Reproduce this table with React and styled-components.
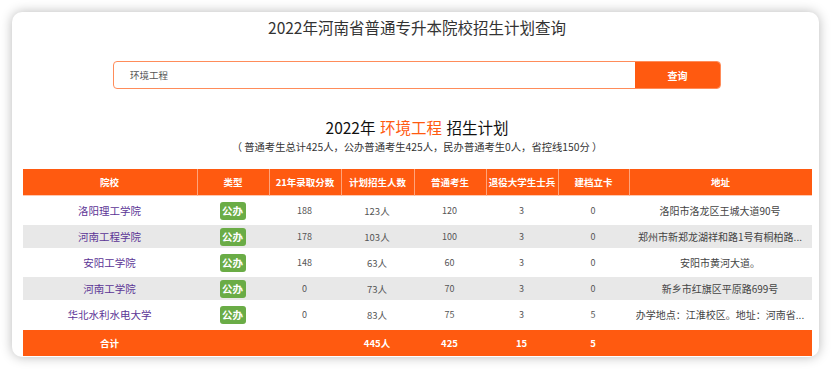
import React from 'react'
import styled, { createGlobalStyle } from 'styled-components';

const GlobalStyle = createGlobalStyle`
    html, body {
        margin: 0;
        padding: 0;
        background: #ffffff;
        font-family: "Noto Sans CJK SC", "Noto Sans", sans-serif;
    }
`

const Page = styled.div`
    padding: 12px 13px 13px 12px;
    width: 832px;
    height: 370px;
    box-sizing: border-box;
`

const Card = styled.div`
    background: #ffffff;
    border-radius: 10px;
    box-shadow: 0 0 12px rgba(0, 0, 0, 0.28);
    height: 345px;
    padding: 0 7px 0 10px;
    box-sizing: border-box;
    overflow: hidden;
    display: flex;
    flex-direction: column;
    align-items: center;
`

const Title = styled.h1`
    margin: 0;
    height: 30px;
    line-height: 30px;
    font-size: 15.5px;
    font-weight: 400;
    color: #333;
`

const SearchBar = styled.div`
    margin-top: 19px;
    display: flex;
    width: 608px;
    height: 28px;
    border: 1px solid #ff8c5a;
    border-radius: 4px;
    box-sizing: border-box;
    overflow: hidden;
`

const SearchInput = styled.div`
    flex: 1;
    padding-left: 16px;
    display: flex;
    align-items: center;
    font-size: 9.5px;
    color: #555;
`

const SearchButton = styled.button`
    width: 85px;
    border: none;
    background: #ff5a10;
    color: #fff;
    font-family: inherit;
    font-size: 10px;
    font-weight: 700;
    padding: 0;
`

const Heading = styled.h2`
    margin: 26px 0 0;
    line-height: 24px;
    font-size: 15.5px;
    font-weight: 400;
    color: #111;
    word-spacing: 1px;

    span {
        color: #ff5a10;
    }
`

const Summary = styled.p`
    margin: 0;
    line-height: 16px;
    font-size: 10.3px;
    color: #333;
`

const Table = styled.table`
    margin-top: 14px;
    width: 789px;
    table-layout: fixed;
    border-collapse: separate;
    border-spacing: 0;
    font-size: 10px;
    text-align: center;
`

const HeadCell = styled.th`
    height: 26px;
    padding: 0;
    background: #ff5a10;
    color: #fff;
    font-weight: 700;
    font-size: 9.5px;
    white-space: nowrap;
    border-left: 1px solid rgba(255, 255, 255, 0.45);
    border-bottom: 1px solid #ffc8b0;

    &:first-child { border-left: none; }
`

const Row = styled.tr`
    background: ${p => (p.$striped ? '#e8e8e8' : '#ffffff')};
`

const Cell = styled.td`
    height: 23px;
    padding: 0 4px;
    border-top: 3px solid #ffffff;
    color: ${p => p.$color || '#555'};
    font-size: ${p => p.$size || '9px'};
    white-space: nowrap;
    overflow: hidden;
`

const Badge = styled.span`
    display: inline-block;
    width: 26px;
    height: 18px;
    line-height: 18px;
    border-radius: 3px;
    background: #6aac46;
    color: #fff;
    font-size: 10.5px;
    font-weight: 700;
    vertical-align: middle;
`

const FootCell = styled.td`
    height: 26px;
    padding: 0;
    border-top: 4px solid #ffffff;
    background: #ff5a10;
    color: #fff;
    font-size: 9.5px;
    font-weight: 700;
`

const widths = [174, 72, 72, 73, 72, 72, 71, 183];
const headers = ['院校', '类型', '21年录取分数', '计划招生人数', '普通考生', '退役大学生士兵', '建档立卡', '地址'];

const schools = [
    { name: '洛阳理工学院', score: 188, plan: '123人', normal: 120, soldier: 3, poor: 0, addr: '洛阳市洛龙区王城大道90号' },
    { name: '河南工程学院', score: 178, plan: '103人', normal: 100, soldier: 3, poor: 0, addr: '郑州市新郑龙湖祥和路1号有桐柏路...' },
    { name: '安阳工学院', score: 148, plan: '63人', normal: 60, soldier: 3, poor: 0, addr: '安阳市黄河大道。' },
    { name: '河南工学院', score: 0, plan: '73人', normal: 70, soldier: 3, poor: 0, addr: '新乡市红旗区平原路699号' },
    { name: '华北水利水电大学', score: 0, plan: '83人', normal: 75, soldier: 3, poor: 5, addr: '办学地点：江淮校区。地址：河南省...' },
];

export default function App() {
    return (
        <Page>
            <GlobalStyle />
            <Card>
                <Title>2022年河南省普通专升本院校招生计划查询</Title>
                <SearchBar>
                    <SearchInput>环境工程</SearchInput>
                    <SearchButton>查询</SearchButton>
                </SearchBar>
                <Heading>2022年 <span>环境工程</span> 招生计划</Heading>
                <Summary>（ 普通考生总计425人，公办普通考生425人，民办普通考生0人，省控线150分 ）</Summary>
                <Table>
                    <colgroup>
                        {widths.map((w, i) => <col key={i} style={{ width: w }} />)}
                    </colgroup>
                    <thead>
                        <tr>
                            {headers.map(h => <HeadCell key={h}>{h}</HeadCell>)}
                        </tr>
                    </thead>
                    <tbody>
                        {schools.map((s, i) => (
                            <Row key={s.name} $striped={i % 2 === 1}>
                                <Cell $color='#5b3596' $size='10.5px'>{s.name}</Cell>
                                <Cell><Badge>公办</Badge></Cell>
                                <Cell>{s.score}</Cell>
                                <Cell $size='9.5px'>{s.plan}</Cell>
                                <Cell>{s.normal}</Cell>
                                <Cell>{s.soldier}</Cell>
                                <Cell>{s.poor}</Cell>
                                <Cell $color='#444' $size='10px'>{s.addr}</Cell>
                            </Row>
                        ))}
                        <tr>
                            <FootCell>合计</FootCell>
                            <FootCell />
                            <FootCell />
                            <FootCell>445人</FootCell>
                            <FootCell>425</FootCell>
                            <FootCell>15</FootCell>
                            <FootCell>5</FootCell>
                            <FootCell />
                        </tr>
                    </tbody>
                </Table>
            </Card>
        </Page>
    )
}
